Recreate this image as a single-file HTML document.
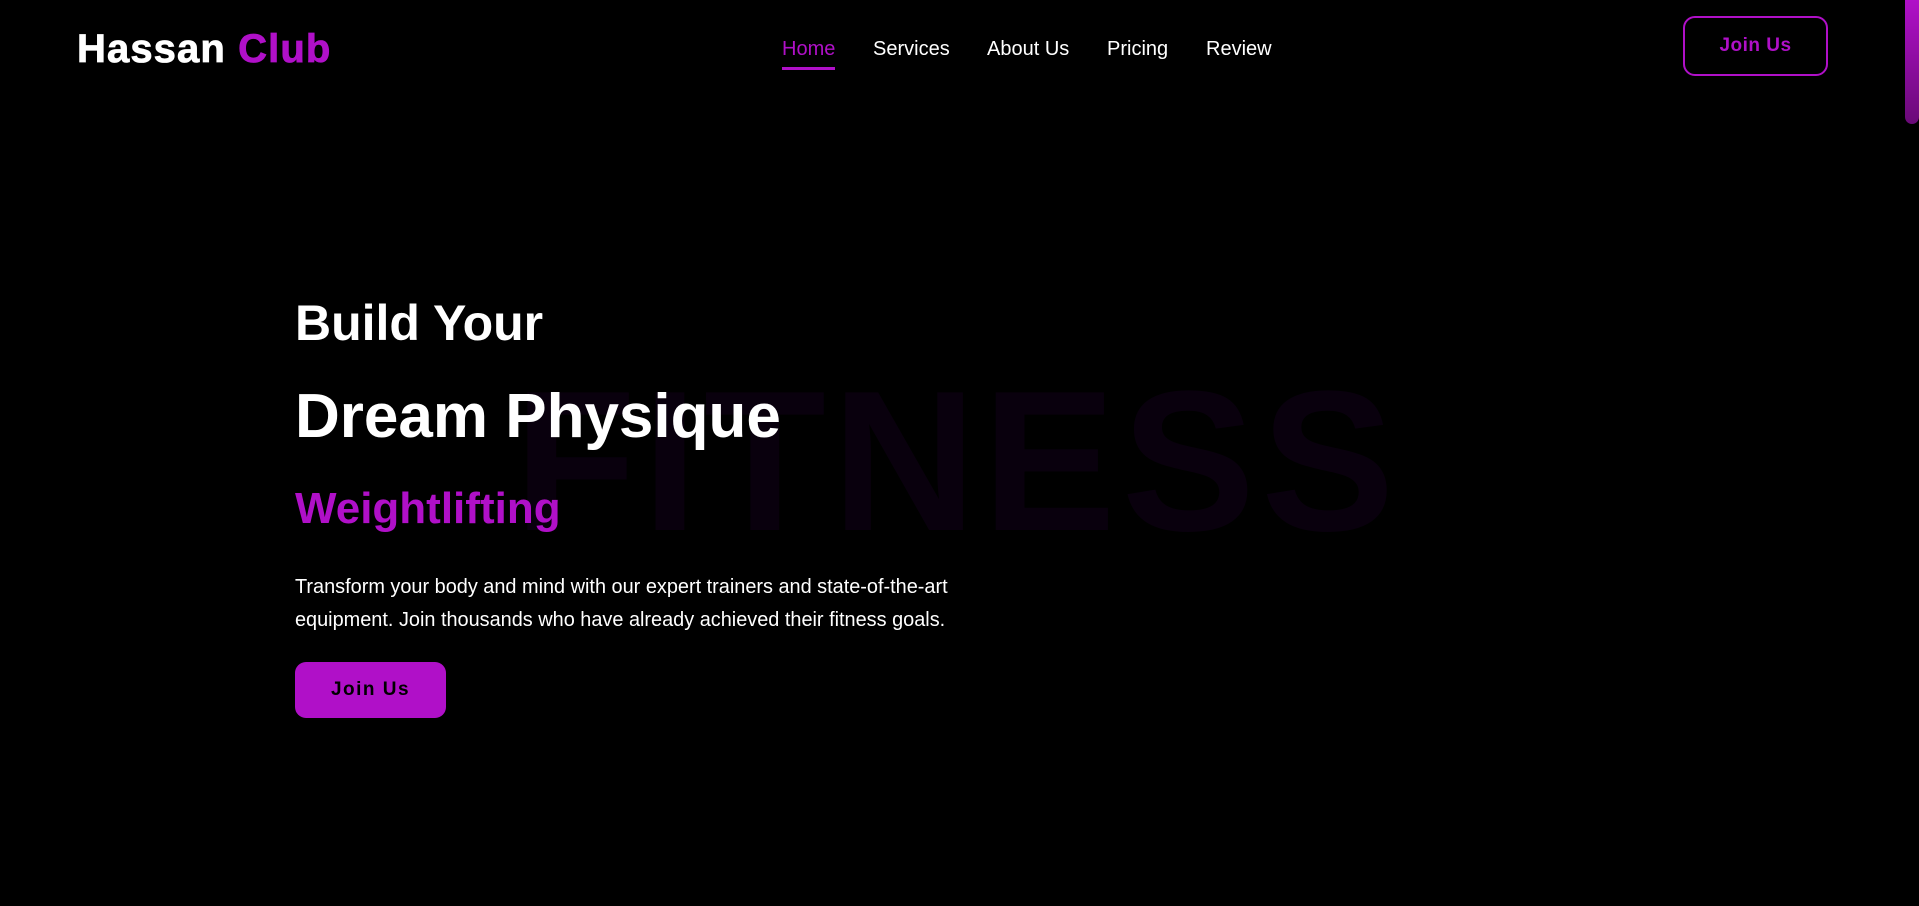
<!DOCTYPE html>
<html><head><meta charset="utf-8"><style>
html,body{margin:0;padding:0;background:#000;width:1919px;height:906px;overflow:hidden;font-family:"Liberation Sans",Arial,sans-serif;}
.a{position:absolute;white-space:nowrap;line-height:1;}
.logo{left:77px;top:29px;font-size:40px;font-weight:bold;color:#fff;letter-spacing:1.1px;-webkit-text-stroke:0.8px #fff;}
.logo span{color:#b010c8;-webkit-text-stroke:0.8px #b010c8;}
.nav{top:39px;font-size:20px;color:#fff;}
.home{color:#b010c8;}
.ul{position:absolute;left:782px;top:67px;width:53px;height:3px;background:#b010c8;}
.btn1{position:absolute;left:1683px;top:16px;width:141px;height:56px;border:2px solid #b010c8;border-radius:12px;color:#b010c8;font-weight:bold;font-size:19px;display:flex;align-items:center;justify-content:center;letter-spacing:0.5px;}
.sb{position:absolute;left:1905px;top:0;width:14px;height:124px;border-radius:0 0 7px 7px;background:linear-gradient(#b010c8,#6a0a78);}
.fit{left:514px;top:362px;font-size:200px;font-weight:bold;color:#09000d;letter-spacing:6px;}
.h1{left:295px;top:298px;font-size:50px;font-weight:bold;color:#fff;}
.h2{left:295px;top:386px;font-size:62px;font-weight:bold;color:#fff;}
.h3{left:295px;top:487px;font-size:44px;font-weight:bold;color:#b010c8;}
.p{position:absolute;left:295px;top:571px;font-size:19.9px;line-height:33px;color:#fff;width:760px;}
.btn2{position:absolute;left:295px;top:662px;width:151px;height:56px;border-radius:11px;background:#b010c8;color:#000;font-weight:bold;font-size:19px;letter-spacing:1.5px;display:flex;align-items:center;justify-content:center;}
</style></head><body>
<div class="a logo">Hassan <span>Club</span></div>
<div class="a nav home" style="left:782px">Home</div>
<div class="ul"></div>
<div class="a nav" style="left:873px">Services</div>
<div class="a nav" style="left:987px">About Us</div>
<div class="a nav" style="left:1107px">Pricing</div>
<div class="a nav" style="left:1206px">Review</div>
<div class="btn1">Join Us</div>
<div class="sb"></div>
<div class="a fit">FITNESS</div>
<div class="a h1">Build Your</div>
<div class="a h2">Dream Physique</div>
<div class="a h3">Weightlifting</div>
<div class="p">Transform your body and mind with our expert trainers and state-of-the-art<br>equipment. Join thousands who have already achieved their fitness goals.</div>
<div class="btn2">Join Us</div>
</body></html>
